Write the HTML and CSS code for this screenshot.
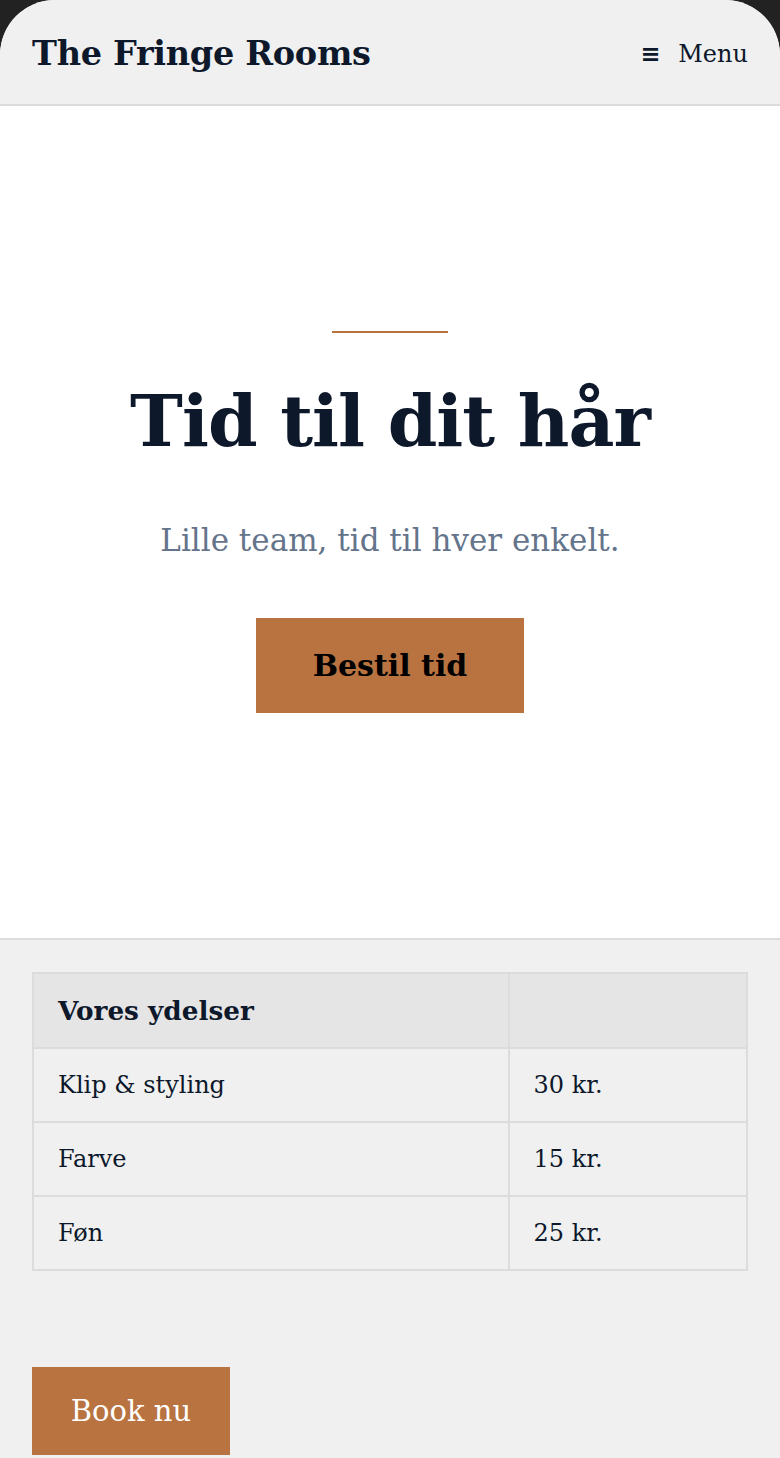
FILE: index.html
```html
<!DOCTYPE html>
<html lang="da">
<head>
<meta charset="utf-8">
<title>The Fringe Rooms</title>
<link rel="stylesheet" href="styles.css">
</head>
<body>
<div class="page">
  <header class="site-header">
    <div class="brand">The Fringe Rooms</div>
    <button class="menu-btn"><span class="menu-icon">≡</span><span>Menu</span></button>
  </header>
  <section class="hero">
    <div class="accent-line"></div>
    <h1 class="hero-title">Tid til dit hår</h1>
    <p class="hero-sub">Lille team, tid til hver enkelt.</p>
    <a class="btn-primary" href="#">Bestil tid</a>
  </section>
  <section class="services">
    <table class="price-table">
      <thead>
        <tr><th class="col-name">Vores ydelser</th><th class="col-price"></th></tr>
      </thead>
      <tbody>
        <tr><td>Klip &amp; styling</td><td>30 kr.</td></tr>
        <tr><td>Farve</td><td>15 kr.</td></tr>
        <tr><td>Føn</td><td>25 kr.</td></tr>
      </tbody>
    </table>
    <a class="btn-book" href="#">Book nu</a>
  </section>
</div>
</body>
</html>
```

FILE: styles.css
```css
html, body {
  margin: 0;
  padding: 0;
  background: #222222;
}
body {
  font-family: "DejaVu Serif", Georgia, serif;
  color: #0d182b;
}
.page {
  background: #f0f0f0;
  border-radius: 55px 55px 0 0;
  overflow: hidden;
  min-height: 1458px;
}
.site-header {
  height: 106px;
  box-sizing: border-box;
  padding: 0 32px;
  display: flex;
  align-items: center;
  justify-content: space-between;
  border-bottom: 2px solid #dcdcdc;
  background: #f0f0f0;
}
.brand {
  font-size: 33.5px;
  font-weight: bold;
  letter-spacing: -0.3px;
  color: #0d182b;
  padding-top: 2px;
}
.menu-btn {
  background: none;
  border: none;
  padding: 0;
  font-family: inherit;
  font-size: 24px;
  color: #0d182b;
  display: flex;
  align-items: center;
  gap: 18px;
  padding-top: 4px;
}
.menu-icon {
  font-size: 24px;
  font-family: "DejaVu Sans", sans-serif;
  font-weight: bold;
}
.hero {
  background: #ffffff;
  height: 832px;
  display: flex;
  flex-direction: column;
  align-items: center;
  justify-content: center;
  text-align: center;
}
.accent-line {
  width: 116px;
  height: 2px;
  background: #b87340;
}
.hero-title {
  margin: 48px 0 0;
  font-size: 71px;
  line-height: 1.15;
  font-weight: bold;
  letter-spacing: -1px;
  color: #0d182b;
}
.hero-sub {
  margin: 58px 0 0;
  font-size: 31px;
  color: #64748b;
  line-height: 1.3;
}
.btn-primary {
  margin-top: 58px;
  width: 268px;
  height: 95px;
  display: flex;
  align-items: center;
  justify-content: center;
  background: #b87340;
  color: #000000;
  font-size: 30px;
  font-weight: bold;
  text-decoration: none;
}
.services {
  border-top: 2px solid #dcdcdc;
  padding: 32px 32px 0;
  background: #f0f0f0;
}
.price-table {
  width: 100%;
  border-collapse: collapse;
  border: 2px solid #dcdcdc;
  font-size: 24px;
}
.price-table th,
.price-table td {
  border: 2px solid #dcdcdc;
  height: 74px;
  box-sizing: border-box;
  padding: 0 24px;
  text-align: left;
  color: #0d182b;
}
.price-table th {
  height: 75px;
  background: #e6e5e6;
  font-weight: bold;
  font-size: 26.3px;
}
.col-name { width: 66.6%; }
.btn-book {
  margin-top: 96px;
  width: 198px;
  height: 88px;
  display: flex;
  align-items: center;
  justify-content: center;
  background: #b87340;
  color: #ffffff;
  font-size: 29px;
  text-decoration: none;
}
```
